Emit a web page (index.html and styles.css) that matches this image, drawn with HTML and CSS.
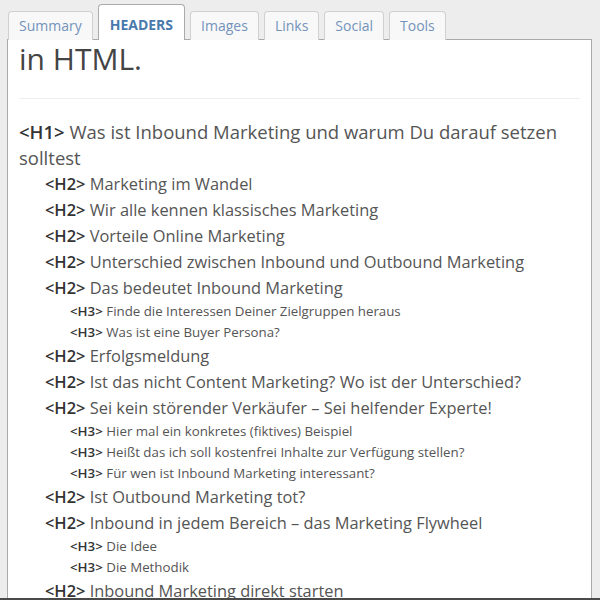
FILE: index.html
```html
<!DOCTYPE html>
<html lang="de">
<head>
    <meta charset="UTF-8">
    <meta name="viewport" content="width=device-width, initial-scale=1.0">
    <title>Headers</title>
    <link rel="stylesheet" href="styles.css">
</head>
<body>
    <div class="wrap">
        <ul class="tabs">
            <li class="tab">Summary</li>
            <li class="tab active">HEADERS</li>
            <li class="tab">Images</li>
            <li class="tab">Links</li>
            <li class="tab">Social</li>
            <li class="tab">Tools</li>
        </ul>

        <div class="panel">
            <p class="intro">in HTML.</p>
            <hr>

            <ul class="outline">
                <li class="h1"><b>&lt;H1&gt;</b> Was ist Inbound Marketing und warum Du darauf setzen solltest</li>
                <li class="h2"><b>&lt;H2&gt;</b> Marketing im Wandel</li>
                <li class="h2"><b>&lt;H2&gt;</b> Wir alle kennen klassisches Marketing</li>
                <li class="h2"><b>&lt;H2&gt;</b> Vorteile Online Marketing</li>
                <li class="h2"><b>&lt;H2&gt;</b> Unterschied zwischen Inbound und Outbound Marketing</li>
                <li class="h2"><b>&lt;H2&gt;</b> Das bedeutet Inbound Marketing</li>
                <li class="h3"><b>&lt;H3&gt;</b> Finde die Interessen Deiner Zielgruppen heraus</li>
                <li class="h3"><b>&lt;H3&gt;</b> Was ist eine Buyer Persona?</li>
                <li class="h2"><b>&lt;H2&gt;</b> Erfolgsmeldung</li>
                <li class="h2"><b>&lt;H2&gt;</b> Ist das nicht Content Marketing? Wo ist der Unterschied?</li>
                <li class="h2"><b>&lt;H2&gt;</b> Sei kein störender Verkäufer – Sei helfender Experte!</li>
                <li class="h3"><b>&lt;H3&gt;</b> Hier mal ein konkretes (fiktives) Beispiel</li>
                <li class="h3"><b>&lt;H3&gt;</b> Heißt das ich soll kostenfrei Inhalte zur Verfügung stellen?</li>
                <li class="h3"><b>&lt;H3&gt;</b> Für wen ist Inbound Marketing interessant?</li>
                <li class="h2"><b>&lt;H2&gt;</b> Ist Outbound Marketing tot?</li>
                <li class="h2"><b>&lt;H2&gt;</b> Inbound in jedem Bereich – das Marketing Flywheel</li>
                <li class="h3"><b>&lt;H3&gt;</b> Die Idee</li>
                <li class="h3"><b>&lt;H3&gt;</b> Die Methodik</li>
                <li class="h2"><b>&lt;H2&gt;</b> Inbound Marketing direkt starten</li>
                <li class="h3"><b>&lt;H3&gt;</b> Fazit</li>
            </ul>
        </div>
    </div>
    <div class="bottom-edge"></div>
</body>
</html>
```

FILE: styles.css
```css
html, body {
    height: 600px;
    overflow: hidden;
}
body {
    margin: 0;
    background-color: #ededed;
    font-family: "Open Sans", "Liberation Sans", sans-serif;
    color: #555;
}
.wrap {
    padding: 4px 8px 0 7px;
}
.tabs {
    display: flex;
    align-items: flex-end;
    gap: 5px;
    list-style: none;
    margin: 0;
    padding: 0 0 0 1px;
}
.tab {
    font-size: 14px;
    line-height: 19px;
    padding: 4px 10px 5px;
    margin-bottom: -1px;
    border: 1px solid #d0d0d0;
    border-bottom: none;
    border-radius: 4px 4px 0 0;
    background-color: #f8f8f8;
    color: #7393bb;
}
.tab.active {
    position: relative;
    padding: 10px 11px 6px;
    background-color: #fff;
    border-color: #aaa;
    color: #4a79ad;
    font-weight: bold;
}
.panel {
    background-color: #fff;
    border: 1px solid #aaa;
    border-bottom: none;
    padding: 0 11px;
    height: 580px;
}
.intro {
    margin: 0;
    font-size: 30px;
    line-height: 36px;
    margin-top: 1px;
    color: #444;
}
hr {
    border: none;
    border-top: 1px solid #eee;
    margin: 21px 0 20px;
}
.outline {
    list-style: none;
    margin: 0;
    padding: 0;
}
.outline b {
    color: #333;
    font-weight: 600;
}
.h1 {
    font-size: 18.5px;
    line-height: 26px;
}
.h2 {
    font-size: 16.4px;
    line-height: 26px;
    padding-left: 26px;
}
.h3 {
    font-size: 13.3px;
    line-height: 21px;
    padding-left: 51px;
}
.bottom-edge {
    position: fixed;
    left: 0;
    right: 0;
    bottom: 0;
    height: 2px;
    background-color: #4a4a4a;
}
```
